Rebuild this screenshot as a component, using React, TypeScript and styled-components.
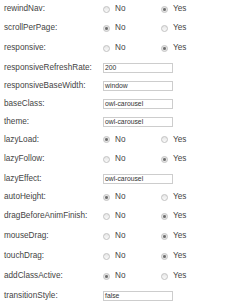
import styled, {createGlobalStyle} from "styled-components";

const GlobalStyle = createGlobalStyle`
  html, body {
    margin: 0;
    padding: 0;
    background: #fff;
  }
  body {
    font-family: "Liberation Sans", Arial, sans-serif;
    color: #333;
  }
`;

const Form = styled.div`
  width: 250px;
  display: flex;
  flex-direction: column;
`;

const Row = styled.div<{ $h: number }>`
  display: grid;
  grid-template-columns: 99px 1fr;
  align-items: center;
  height: ${p => p.$h}px;
  padding-left: 4px;
`;

const Label = styled.span`
  font-size: 8.2px;
  line-height: 10px;
  color: #444;
  white-space: nowrap;
`;

const Group = styled.div`
  display: flex;
  align-items: center;
`;

const Option = styled.label`
  display: flex;
  align-items: center;
  gap: 5px;
  width: 58px;
  font-size: 8.2px;
  line-height: 10px;
  color: #444;
`;

const Dot = styled.span<{ $on: boolean }>`
  box-sizing: border-box;
  width: 7px;
  height: 7px;
  border-radius: 50%;
  border: 1px solid #c2c2c2;
  background: ${p => p.$on
    ? "radial-gradient(circle, #6a6a6a 0, #7a7a7a 1.2px, #e4e4e4 1.8px, #f4f4f4 100%)"
    : "linear-gradient(#e6e6e6, #fafafa)"};
`;

const TextBox = styled.div`
  box-sizing: border-box;
  width: 70px;
  height: 10px;
  border: 1px solid #cdcdcd;
  background: #fff;
  padding-left: 1px;
  font-size: 6.8px;
  line-height: 8px;
  color: #333;
  white-space: nowrap;
  overflow: hidden;
`;

type Field = { name: string; yes?: boolean; text?: string; h: number };

const fields: Field[] = [
    {name: "rewindNav", yes: true, h: 18},
    {name: "scrollPerPage", yes: false, h: 20},
    {name: "responsive", yes: true, h: 20},
    {name: "responsiveRefreshRate", text: "200", h: 19},
    {name: "responsiveBaseWidth", text: "window", h: 18},
    {name: "baseClass", text: "owl-carousel", h: 18},
    {name: "theme", text: "owl-carousel", h: 17},
    {name: "lazyLoad", yes: false, h: 19},
    {name: "lazyFollow", yes: true, h: 20},
    {name: "lazyEffect", text: "owl-carousel", h: 19},
    {name: "autoHeight", yes: false, h: 18},
    {name: "dragBeforeAnimFinish", yes: true, h: 20},
    {name: "mouseDrag", yes: true, h: 20},
    {name: "touchDrag", yes: true, h: 20},
    {name: "addClassActive", yes: false, h: 20},
    {name: "transitionStyle", text: "false", h: 19},
];

export default function App() {
    return (
        <>
            <GlobalStyle />
            <Form>
                {fields.map(f => (
                    <Row key={f.name} $h={f.h}>
                        <Label>{f.name}:</Label>
                        {f.text !== undefined ? <TextBox>{f.text}</TextBox> : (
                            <Group>
                                <Option><Dot $on={!f.yes} />No</Option>
                                <Option><Dot $on={!!f.yes} />Yes</Option>
                            </Group>
                        )}
                    </Row>
                ))}
            </Form>
        </>
    );
}
